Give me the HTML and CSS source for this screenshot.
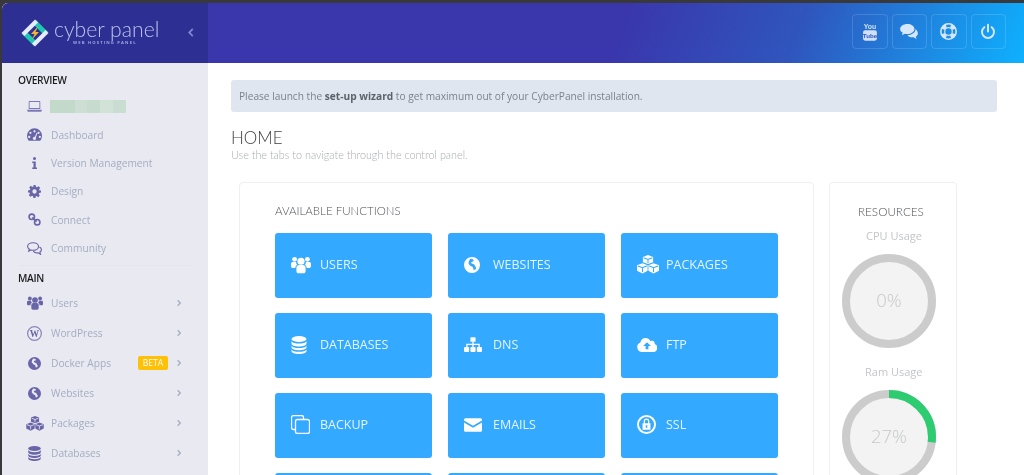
FILE: index.html
```html
<!DOCTYPE html>
<html lang="en">
<head>
<meta charset="utf-8">
<title>CyberPanel</title>
<link rel="stylesheet" href="styles.css">
</head>
<body>
<svg class="defs" width="0" height="0" aria-hidden="true">
  <symbol id="i-users" viewBox="0 0 24 20">
    <circle cx="12" cy="5.500" r="4.300"/><circle cx="4.300" cy="3.200" r="2.900"/><circle cx="19.700" cy="3.200" r="2.900"/>
    <path d="M6.500 13.500c0-2.500 1.500-3.500 3-3.500h5c1.500 0 3 1 3 3.500v4c0 1.500-1 2.500-2.500 2.500h-6C7.500 20 6.500 19 6.500 17.500z"/>
    <path d="M0 9C0 7 1 6.500 2.500 6.500h3.700c-.2 1.500.5 2.700 1.300 3.300C6 10.500 5.200 12 5.200 13.500H2C.8 13.500 0 12.500 0 11.500zM24 9C24 7 23 6.500 21.500 6.500h-3.700c.2 1.500-.5 2.700-1.300 3.300 1.500.7 2.300 2.200 2.300 3.700H22c1.200 0 2-1 2-2z"/>
  </symbol>
  <symbol id="i-globe" viewBox="0 0 24 24">
    <path fill-rule="evenodd" d="M12 0a12 12 0 1 0 0 24 12 12 0 0 0 0-24zM9.500 3c1.500-.5 3 0 4 .8 1 .8 1.500 2 .5 2.700-1 .7-2.500.5-3 1.500-.5 1 .3 2 1.500 2.300 1.700.5 3.200 1 3.700 2.500.4 1.300 1 2.200 1.800 2.800.7.500.2 1.500-.8 2.600-1.200 1.300-2.500 1.500-3 .5-.5-1-.3-2.500-1-3.500-.8-1-2.500-.8-3.500-2-.8-1-1.500-1.800-2.500-2.500C6.500 9.500 7 5 9.500 3z"/>
  </symbol>
  <symbol id="i-boxes" viewBox="0 0 28 24">
    <path d="M14 0l6.500 2.500v6.500L14 11.500 7.500 9V2.500z"/><path d="M7 10.500l6.500 2.500v7L7 23.500 0 20v-7z"/><path d="M21 10.500l7 2.500v7l-7 3.500-6.500-3.500v-7z"/>
    <path class="knock" d="M8.500 3.500L14 5.700l5.500-2.200M14 5.700v4.500M1 13.800L7 16l5.500-2.200M7 16v5.500M15.500 13.800L21 16l6-2.200M21 16v5.500"/>
  </symbol>
  <symbol id="i-db" viewBox="0 0 20 24">
    <ellipse cx="10" cy="4" rx="10" ry="4"/>
    <path d="M0 6.500C1 9 5.500 10 10 10s9-1 10-3.500V10c0 2.500-4.500 4-10 4S0 12.500 0 10zM0 12.500C1 15 5.500 16 10 16s9-1 10-3.500V15c0 2.500-4.500 4-10 4S0 17.500 0 15zM0 17.500C1 20 5.500 21 10 21s9-1 10-3.500V20c0 2.500-4.500 4-10 4S0 22.500 0 20z"/>
  </symbol>
  <symbol id="i-sitemap" viewBox="0 0 28 24">
    <rect x="10" y="0" width="8" height="7" rx="1"/><rect x="0" y="15" width="8" height="8" rx="1.500"/><rect x="10" y="15" width="8" height="8" rx="1.500"/><rect x="20" y="15" width="8" height="8" rx="1.500"/>
    <path d="M13 7h2v3h9.500v5h-2v-3H15v3h-2v-3H5.500v3h-2v-5H13z"/>
  </symbol>
  <symbol id="i-cloud" viewBox="0 0 28 20">
    <path fill-rule="evenodd" d="M7 20a7 7 0 0 1-2.500-13.500A8 8 0 0 1 12 0c3.500 0 6 2 7 4.500 .8-.3 1.500-.5 2.500-.5 2.200 0 3.800 2 3.500 4.500A6 6 0 0 1 22 20zM14 6l-5.500 5.500h3.500V16h4v-4.500h3.500z"/>
  </symbol>
  <symbol id="i-copy" viewBox="0 0 19 19">
    <path class="line" d="M4 14.500H2.500a2 2 0 0 1-2-2V2.500a2 2 0 0 1 2-2h8a2 2 0 0 1 2 2V4"/><rect class="line" x="4.500" y="4.500" width="14" height="14" rx="2"/>
  </symbol>
  <symbol id="i-mail" viewBox="0 0 24 18">
    <path d="M2 0h20a2 2 0 0 1 2 2v1L12 10 0 3V2a2 2 0 0 1 2-2zM0 5.500l12 7 12-7V16a2 2 0 0 1-2 2H2a2 2 0 0 1-2-2z"/>
  </symbol>
  <symbol id="i-ssl" viewBox="0 0 24 24">
    <path fill-rule="evenodd" d="M12 0a12 12 0 1 0 0 24 12 12 0 0 0 0-24zm0 2.500a9.500 9.500 0 1 1 0 19 9.500 9.500 0 0 1 0-19z"/>
    <path fill-rule="evenodd" d="M8.500 10.500V8a3.500 3.500 0 0 1 7 0v2.500H17V18.500H7V10.500zM10 10.500h4V8a2 2 0 0 0-4 0zM11 13v3h2v-3z"/>
  </symbol>
  <symbol id="i-laptop" viewBox="0 0 24 18">
    <path fill-rule="evenodd" d="M4 0h16a1.500 1.500 0 0 1 1.500 1.500V13h-19V1.500A1.500 1.500 0 0 1 4 0zm0 1.500V11.500h16V1.500zM0 14.500h24v1.200c0 1-.8 1.800-1.800 1.800H1.800C.8 17.500 0 16.700 0 15.700z"/>
  </symbol>
  <symbol id="i-gauge" viewBox="0 0 24 20">
    <path fill-rule="evenodd" d="M12 0A12 12 0 0 0 0 12c0 3 1 5.500 2.500 7.500.4.500 1 .5 1.500.5h16c.500 0 1 0 1.500-.5C23 17.500 24 15 24 12A12 12 0 0 0 12 0zM12 3a1.800 1.800 0 1 1 0 3.600A1.800 1.800 0 0 1 12 3zM5.500 5.500a1.800 1.800 0 1 1 0 3.600 1.800 1.800 0 0 1 0-3.600zM18.500 5.500a1.800 1.800 0 1 1 0 3.600 1.800 1.800 0 0 1 0-3.600zM3.500 12a1.800 1.800 0 1 1 0 3.600 1.800 1.800 0 0 1 0-3.600zM20.500 12a1.800 1.800 0 1 1 0 3.600 1.800 1.800 0 0 1 0-3.600zM15.500 7l1.300.5-2.800 7.200c.8 1 .8 2.300-.2 3.200-1.200 1-3 1-4-.3-1-1.200-.5-3 1-3.700.7-.3 1.100-.3 1.800-.2z"/>
  </symbol>
  <symbol id="i-info" viewBox="0 0 10 24">
    <circle cx="5" cy="3" r="3"/><path d="M.5 9h7v12H10v3H.5v-3H3v-9H.5z"/>
  </symbol>
  <symbol id="i-gear" viewBox="0 0 24 24">
    <path fill-rule="evenodd" d="M10 0h4l.7 3.400 1.900.8L19.600 2.300l2.800 2.800-1.900 3 .8 1.900L24 10v4l-3.400.7-.8 1.900 1.900 3-2.800 2.800-3-1.900-1.900.8L14 24h-4l-.7-3.400-1.900-.8-3 1.900-2.800-2.800 1.900-3-.8-1.900L0 14v-4l3.400-.7.8-1.900-1.900-3 2.800-2.800 3 1.900 1.900-.8zM12 8a4 4 0 1 0 0 8 4 4 0 0 0 0-8z"/>
  </symbol>
  <symbol id="i-link" viewBox="0 0 24 24">
    <circle class="line3" cx="7" cy="7" r="5"/><circle class="line3" cx="17" cy="17" r="5"/><path class="line3" d="M8 8l8 8"/>
  </symbol>
  <symbol id="i-chat" viewBox="0 0 26 22">
    <path class="line2" d="M10.500 1C5.300 1 1 3.800 1 7.500c0 2 1.300 3.700 3.200 4.900L3 15.500l4-2c1.100.3 2.300.5 3.500.5 5.200 0 9.500-2.800 9.500-6.500S15.700 1 10.500 1z"/>
    <path class="line2" d="M21.500 8.500c2 1 3.500 2.700 3.500 4.500 0 1.800-1 3.200-2.700 4.200L23.500 21l-4.500-2.500c-3.500.5-6.500-.5-8-3"/>
  </symbol>
  <symbol id="i-chats" viewBox="0 0 26 22">
    <path d="M10.500 0C4.700 0 0 3.200 0 7.200c0 2.300 1.500 4.300 3.800 5.600L2.500 16.500l4.500-2.300c1.100.300 2.300.4 3.500.4 5.800 0 10.500-3.300 10.500-7.400S16.300 0 10.500 0z"/>
    <path d="M22.500 7.500c.3 5-5 9-12 9 1.500 1.800 4 3 7 3 .7 0 1.500 0 2.200-.2L24 22l-1-3.500c2-1.100 3-2.800 3-4.500 0-2.500-1.500-4.800-3.500-6.500z"/>
  </symbol>
  <symbol id="i-ring" viewBox="0 0 24 24">
    <path fill-rule="evenodd" d="M12 0a12 12 0 1 0 0 24 12 12 0 0 0 0-24zM8.500 2.800a10 10 0 0 1 7 0l-1 3.500a6.500 6.500 0 0 0-5 0zM2.800 8.500l3.500 1a6.500 6.500 0 0 0 0 5l-3.500 1a10 10 0 0 1 0-7zM21.200 8.500a10 10 0 0 1 0 7l-3.500-1a6.500 6.500 0 0 0 0-5zM12 7.500a4.500 4.500 0 1 1 0 9 4.500 4.500 0 0 1 0-9zM9.500 17.700a6.500 6.500 0 0 0 5 0l1 3.500a10 10 0 0 1-7 0z"/>
  </symbol>
  <symbol id="i-power" viewBox="0 0 24 24">
    <path class="line4" d="M12 2v10"/><path class="line4" d="M6.500 5.500a9 9 0 1 0 11 0"/>
  </symbol>
  <symbol id="i-chev" viewBox="0 0 6 10">
    <path class="line2" d="M1 1l4 4-4 4"/>
  </symbol>
  <symbol id="i-chevl" viewBox="0 0 6 10">
    <path class="line2" d="M5 1L1 5l4 4"/>
  </symbol>
</svg>

<div class="window">
  <aside class="side">
    <div class="brand">
      <svg class="logo" viewBox="0 0 28 28" aria-hidden="true">
        <path class="lg-b" d="M15 1l12 12-3.500 3.500-12-12z"/>
        <path class="lg-b" d="M13 27L1 15l3.500-3.500 12 12z"/>
        <path class="lg-a" d="M0.500 14L14 .5l3 3L3.500 17z"/>
        <path class="lg-a" d="M27.500 14L14 27.500l-3-3L24.500 11z"/>
        <path class="lg-c" d="M17 7.500l-7 7.500h3.500L11 20.500l7-7.500h-3.500z"/>
      </svg>
      <div class="brand-text">
        <span class="brand-name">cyber panel</span>
        <span class="brand-sub">WEB HOSTING PANEL</span>
      </div>
      <svg class="collapse"><use href="#i-chevl"/></svg>
    </div>
    <nav class="nav">
      <h4 class="nav-head">OVERVIEW</h4>
      <div class="nav-item ov tall-top">
        <span class="nav-ic"><svg class="ic-laptop"><use href="#i-laptop"/></svg></span>
        <span class="redact"><i class="r1"></i><i class="r2"></i><i class="r3"></i><i class="r4"></i><i class="r5"></i></span>
      </div>
      <a class="nav-item ov"><span class="nav-ic"><svg class="ic-16"><use href="#i-gauge"/></svg></span>Dashboard</a>
      <a class="nav-item ov"><span class="nav-ic"><svg class="ic-info"><use href="#i-info"/></svg></span>Version Management</a>
      <a class="nav-item ov"><span class="nav-ic"><svg class="ic-14"><use href="#i-gear"/></svg></span>Design</a>
      <a class="nav-item ov"><span class="nav-ic"><svg class="ic-14"><use href="#i-link"/></svg></span>Connect</a>
      <a class="nav-item ov"><span class="nav-ic"><svg class="ic-16"><use href="#i-chat"/></svg></span>Community</a>
      <div class="nav-sep"></div>
      <h4 class="nav-head main-head">MAIN</h4>
      <a class="nav-item mn"><span class="nav-ic"><svg class="ic-users"><use href="#i-users"/></svg></span><span class="grow">Users</span><svg class="chev"><use href="#i-chev"/></svg></a>
      <a class="nav-item mn"><span class="nav-ic"><svg class="ic-16h" viewBox="0 0 24 24"><circle class="wp-ring" cx="12" cy="12" r="11"/><text class="wp-w" x="12" y="18">W</text></svg></span><span class="grow">WordPress</span><svg class="chev"><use href="#i-chev"/></svg></a>
      <a class="nav-item mn"><span class="nav-ic"><svg class="ic-14"><use href="#i-globe"/></svg></span><span class="grow">Docker Apps</span><span class="beta">BETA</span><svg class="chev"><use href="#i-chev"/></svg></a>
      <a class="nav-item mn"><span class="nav-ic"><svg class="ic-14"><use href="#i-globe"/></svg></span><span class="grow">Websites</span><svg class="chev"><use href="#i-chev"/></svg></a>
      <a class="nav-item mn"><span class="nav-ic"><svg class="ic-boxes"><use href="#i-boxes"/></svg></span><span class="grow">Packages</span><svg class="chev"><use href="#i-chev"/></svg></a>
      <a class="nav-item mn"><span class="nav-ic"><svg class="ic-db"><use href="#i-db"/></svg></span><span class="grow">Databases</span><svg class="chev"><use href="#i-chev"/></svg></a>
    </nav>
  </aside>

  <div class="content">
    <header class="topbar">
      <a class="top-btn"><svg class="yt" viewBox="0 0 20 26"><text class="yt-you" x="10" y="9">You</text><rect class="yt-box" x="0" y="10.500" width="20" height="15" rx="3"/><text class="yt-tube" x="10" y="21.500">Tube</text></svg></a>
      <a class="top-btn"><svg class="top-ic"><use href="#i-chats"/></svg></a>
      <a class="top-btn"><svg class="top-ic ring"><use href="#i-ring"/></svg></a>
      <a class="top-btn"><svg class="top-ic pw"><use href="#i-power"/></svg></a>
    </header>
    <main class="main">
      <div class="alert">Please launch the <b>set-up wizard</b> to get maximum out of your CyberPanel installation.</div>
      <h1 class="title">HOME</h1>
      <p class="subtitle">Use the tabs to navigate through the control panel.</p>
      <div class="panels">
        <section class="panel functions">
          <h3 class="panel-title">AVAILABLE FUNCTIONS</h3>
          <div class="grid">
            <a class="fn"><span class="fn-ic"><svg class="f-users"><use href="#i-users"/></svg></span>USERS</a>
            <a class="fn"><span class="fn-ic"><svg class="f-globe"><use href="#i-globe"/></svg></span>WEBSITES</a>
            <a class="fn"><span class="fn-ic"><svg class="f-boxes"><use href="#i-boxes"/></svg></span>PACKAGES</a>
            <a class="fn"><span class="fn-ic"><svg class="f-db"><use href="#i-db"/></svg></span>DATABASES</a>
            <a class="fn"><span class="fn-ic"><svg class="f-site"><use href="#i-sitemap"/></svg></span>DNS</a>
            <a class="fn"><span class="fn-ic"><svg class="f-cloud"><use href="#i-cloud"/></svg></span>FTP</a>
            <a class="fn"><span class="fn-ic"><svg class="f-copy"><use href="#i-copy"/></svg></span>BACKUP</a>
            <a class="fn"><span class="fn-ic"><svg class="f-mail"><use href="#i-mail"/></svg></span>EMAILS</a>
            <a class="fn"><span class="fn-ic"><svg class="f-ssl"><use href="#i-ssl"/></svg></span>SSL</a>
            <a class="fn"></a><a class="fn"></a><a class="fn"></a>
          </div>
        </section>
        <section class="panel resources">
          <h3 class="res-title">RESOURCES</h3>
          <div class="res-label">CPU Usage</div>
          <div class="gauge">
            <svg class="gauge-svg" viewBox="0 0 96 96"><circle class="g-track" cx="48" cy="48" r="43"/></svg>
            <span class="gauge-val">0%</span>
          </div>
          <div class="res-label ram">Ram Usage</div>
          <div class="gauge">
            <svg class="gauge-svg" viewBox="0 0 96 96"><circle class="g-track" cx="48" cy="48" r="43"/><circle class="g-val" cx="48" cy="48" r="43" pathLength="100" transform="rotate(-90 48 48)"/></svg>
            <span class="gauge-val">27%</span>
          </div>
        </section>
      </div>
    </main>
  </div>
</div>
</body>
</html>
```
FILE: styles.css
```css
* { box-sizing: border-box; }
html, body { margin: 0; height: 475px; overflow: hidden; }
body { background: #39393c; padding: 3px 0 0 2px; font-family: "Open Sans", sans-serif; }
.defs { display: block; height: 0; }
.window { display: flex; height: 472px; overflow: hidden; border-top-left-radius: 6px; background: #fff; filter: blur(.35px); }

/* sidebar */
.side { width: 206px; flex: none; background: #e8e9f1; --knock: #e8e9f1; }
.brand { height: 60px; background: #2e2f92; display: flex; align-items: center; padding: 0 0 2px 19px; --knock: #2e2f92; }
.logo { width: 28px; height: 28px; flex: none; margin-top: 1px; }
.lg-a { fill: #e6ecfa; }
.lg-b { fill: #1fc8b0; }
.lg-c { fill: #f0b82a; }
.brand-text { display: flex; flex-direction: column; margin-left: 5px; width: 117px; }
.brand-name { font: 300 21.200px/22px Lato, sans-serif; color: #bcc3ee; white-space: nowrap; }
.brand-sub { font: 700 4.200px/6px "Open Sans", sans-serif; letter-spacing: 1.150px; color: #9ea7e0; white-space: nowrap; padding-left: 19px; margin-top: 0; }
.collapse { width: 6px; height: 9px; margin-left: 17px; color: #7d86cc; fill: none; stroke: currentColor; }
.nav { padding: 10px 0 0 16px; }
.nav-head { margin: 0; font: 600 10.200px/14px "Open Sans", sans-serif; letter-spacing: -.35px; color: #1c1c20; }
.main-head { margin-top: 5px; margin-bottom: 3px; }
.nav-item { display: flex; align-items: center; font-size: 10.200px; color: #a5adc2; white-space: nowrap; }
.ov { height: 28.400px; }
.mn { height: 30px; padding-right: 27px; }
.tall-top { margin-top: 5px; }
.nav-ic { width: 33px; flex: none; display: flex; justify-content: center; fill: #6a65a8; color: #6a65a8; }
.nav-ic svg { display: block; }
.grow { flex: 1; }
.ic-laptop { width: 15px; height: 11px; fill: #7d79b8; }
.ic-16 { width: 15px; height: 13px; }
.ic-16h { width: 15px; height: 15px; }
.ic-14 { width: 13px; height: 13px; }
.ic-info { width: 5px; height: 12px; }
.ic-users { width: 16px; height: 14px; }
.ic-boxes { width: 18px; height: 15px; }
.ic-db { width: 13px; height: 15px; }
.knock { fill: none; stroke: var(--knock); stroke-width: 1.300; }
.line, .line2, .line3, .line4 { fill: none; stroke: currentColor; }
.line { stroke-width: 1.300; }
.line2 { stroke-width: 2; }
.line3 { stroke-width: 3; }
.line4 { stroke-width: 3; stroke-linecap: round; }
.wp-ring { fill: none; stroke: #6a65a8; stroke-width: 2; opacity: .75; }
.wp-w { font: 700 15px "Liberation Serif", serif; text-anchor: middle; fill: #6a65a8; }
.chev { width: 4px; height: 8px; flex: none; color: #a5adc2; fill: none; stroke: currentColor; }
.beta { background: #ffc107; color: #fff; font-size: 8.500px; line-height: 14px; height: 14px; border-radius: 2px; margin-right: 9px; width: 30px; text-align: center; }
.nav-sep { height: 1px; margin: 3px 16px 0 2px; background: #e3e5ee; }
.redact { display: flex; height: 13px; margin-left: -1px; }
.redact i { display: block; height: 13px; }
.r1 { width: 25px; background: #c3dacb; }
.r2 { width: 12px; background: #cddfd4; }
.r3 { width: 13px; background: #c7dccf; }
.r4 { width: 13px; background: #d3e2d9; }
.r5 { width: 13px; background: #c9ddd1; }

/* content */
.content { flex: 1; display: flex; flex-direction: column; min-width: 0; }
.topbar { height: 60px; flex: none; display: flex; gap: 4px; justify-content: flex-end; align-items: flex-start; padding: 11px 18px 0 0; background: linear-gradient(112deg, #3a36ac 0%, #3a36ac 50%, #2f56bd 72%, #0eb1ff 100%); }
.top-btn { width: 35.500px; height: 35px; border: 1px solid rgba(255,255,255,.14); border-radius: 4px; display: flex; align-items: center; justify-content: center; fill: #d6e6fb; color: #d6e6fb; }
.top-ic { width: 18px; height: 15px; }
.ring { width: 17px; height: 17px; }
.pw { width: 16px; height: 17px; }
.yt { width: 14px; height: 18px; }
.yt-you { font: 700 10px "Liberation Sans", sans-serif; text-anchor: middle; fill: #cfe0f8; }
.yt-box { fill: #cfe0f8; }
.yt-tube { font: 700 9px "Liberation Sans", sans-serif; text-anchor: middle; fill: #2f56bd; }

.main { padding: 17px 27px 0 23px; }
.alert { height: 32px; border-radius: 3px; background: #dfe6f0; padding: 0 8px; font-size: 10.170px; line-height: 32px; color: #7c828c; }
.alert b { font-weight: 700; color: #5d6268; }
.title { margin: 15px 0 0; font: 300 17px/21px Lato, sans-serif; color: #3e4045; }
.subtitle { margin: 0; font: 300 10.800px/13px Lato, sans-serif; color: #a8acb0; }
.panels { display: flex; margin: 21px 0 0 8px; gap: 15px; align-items: flex-start; }
.panel { border: 1px solid #eceff3; border-radius: 4px; background: #fff; }
.functions { width: 575px; height: 400px; padding: 21px 35px 0; --knock: #33aaff; }
.panel-title { margin: 0 0 15px; font: 300 11.500px/14px Lato, sans-serif; color: #4f5257; }
.grid { display: grid; grid-template-columns: repeat(3, 157px); grid-auto-rows: 64.500px; column-gap: 16px; row-gap: 15.500px; }
.fn { background: #33aaff; border-radius: 3px; font-size: 12.500px; display: flex; align-items: center; padding: 0 0 1px 16px; fill: #fff; color: #e6f4ff; }
.fn-ic { width: 29px; flex: none; display: flex; align-items: center; color: #fff; }
.fn-ic svg { display: block; }
.f-users { width: 20px; height: 18px; }
.f-globe { width: 16px; height: 16px; }
.f-boxes { width: 22px; height: 19px; }
.f-db { width: 16px; height: 18px; }
.f-site { width: 18px; height: 16px; }
.f-cloud { width: 20px; height: 14px; }
.f-copy { width: 19px; height: 19px; }
.f-mail { width: 18px; height: 14px; }
.f-ssl { width: 19px; height: 19px; }
.resources { width: 128px; height: 400px; padding: 21px 12px 0 11px; }
.res-title { margin: 0; padding-left: 17px; font: 300 11.700px/14px Lato, sans-serif; color: #4f5257; white-space: nowrap; }
.res-label { margin: 11px 0 0; padding-left: 25px; font-size: 11px; line-height: 14px; color: #c3c5c8; white-space: nowrap; }
.ram { margin-top: 16px; padding-left: 24px; }
.gauge { position: relative; width: 96px; height: 96px; margin: 10px 0 0; }
.gauge-svg { display: block; width: 96px; height: 96px; }
.g-track { fill: #f3f3f3; stroke: #cccccc; stroke-width: 8; }
.g-val { fill: none; stroke: #2ecc71; stroke-width: 8; stroke-dasharray: 27 100; }
.gauge-val { position: absolute; inset: 0 0 3px; display: flex; align-items: center; justify-content: center; font-size: 18.500px; font-weight: 300; color: #c6c8ca; }
```
